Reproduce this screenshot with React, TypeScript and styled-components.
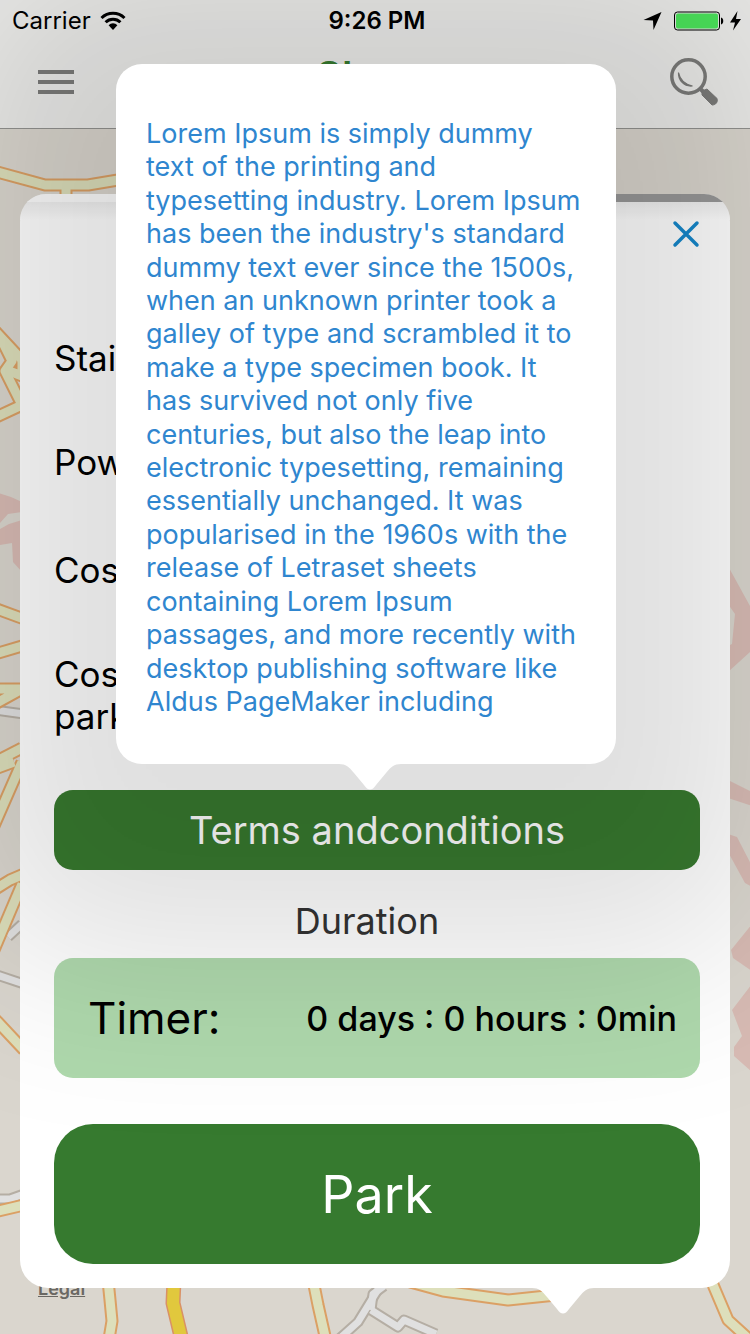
import React from "react";
import styled, { createGlobalStyle } from "styled-components";

const GlobalStyle = createGlobalStyle`
  * { box-sizing: border-box; }
  body { margin: 0; background: #dad6ce; }
  button { border: 0; padding: 0; font: inherit; cursor: pointer; }
`;

const Screen = styled.div`
  position: relative;
  z-index: 0;
  min-height: 100vh;
  overflow: hidden;
  padding-bottom: 46px;
  color: #000;
  font-family: Inter, "Liberation Sans", sans-serif;
`;

const MapLayer = styled.svg`
  position: absolute;
  inset: 0;
  z-index: -2;
  width: 100%;
  height: 100%;
`;

const Header = styled.header`
  height: 129px;
  background: #ebebe9;
  border-bottom: 1px solid #92928f;
`;

const StatusBar = styled.div`
  display: grid;
  grid-template-columns: 1fr auto 1fr;
  align-items: center;
  height: 42px;
  padding: 0 8px 0 12px;
  font-size: 24px;
  line-height: 42px;
`;

const StatusGroup = styled.div<{ $end?: boolean }>`
  display: flex;
  align-items: center;
  justify-content: ${(p) => (p.$end ? "flex-end" : "flex-start")};
  gap: ${(p) => (p.$end ? 6 : 9)}px;
`;

const Clock = styled.time`
  font-weight: 600;
`;

const NavBar = styled.nav`
  display: flex;
  align-items: flex-start;
  justify-content: space-between;
  padding: 14px 30px 0 38px;
`;

const IconButton = styled.button`
  display: flex;
  background: none;
`;

const MenuButton = styled(IconButton)`
  padding-top: 13px;
`;

const Title = styled.h1`
  margin: 0;
  color: #367a2f;
  font-size: 40px;
  font-weight: 600;
  line-height: 40px;
`;

const Card = styled.main`
  position: relative;
  margin: 65px 20px 0;
  padding-bottom: 24px;
  border-radius: 28px;
  background: #fff;
`;

const CardTop = styled.div`
  overflow: hidden;
  height: 26px;
  border-radius: 26px 26px 0 0;
  background: linear-gradient(#e9e9e9, #fff);
`;

const Progress = styled.div`
  height: 8px;
  background: linear-gradient(90deg, #fcfcfc 50%, #989898 50%);
`;

const CardBody = styled.div`
  display: flex;
  flex-direction: column;
  padding: 0 30px 0 34px;
`;

const CloseButton = styled(IconButton)`
  align-self: flex-end;
`;

const Details = styled.div`
  display: flex;
  flex-direction: column;
  gap: 66px;
  margin-top: 89px;
  font-size: 35px;
  line-height: 42px;
`;

const DetailGroup = styled.ul`
  display: flex;
  flex-direction: column;
  gap: 62px;
  margin: 0;
  padding: 0;
  list-style: none;
`;

const Detail = styled.li`
  width: 80px;
`;

const TermsButton = styled.button`
  height: 80px;
  margin-top: 53px;
  border-radius: 19px;
  background: #387a2f;
  color: #fff;
  font-size: 38px;
`;

const DurationTitle = styled.h2`
  margin: 28px 0 0;
  padding-right: 20px;
  text-align: center;
  color: #333;
  font-size: 36px;
  font-weight: 400;
  line-height: 46px;
`;

const TimerRow = styled.div`
  display: flex;
  align-items: center;
  justify-content: space-between;
  height: 120px;
  margin-top: 14px;
  padding: 0 23px 0 34px;
  border-radius: 19px;
  background: #afd9ad;
`;

const TimerLabel = styled.span`
  font-size: 44px;
`;

const TimerValue = styled.output`
  font-size: 34px;
  font-weight: 500;
`;

const ParkButton = styled.button`
  height: 140px;
  margin-top: 46px;
  border-radius: 39px;
  background: #367a2f;
  color: #fff;
  font-size: 52px;
`;

const LegalLink = styled.a`
  position: absolute;
  bottom: 33px;
  left: 38px;
  z-index: -1;
  color: #6a6863;
  font-size: 18px;
  font-weight: 600;
  line-height: 24px;
`;

const Pointer = styled.svg<{ $x: string }>`
  position: absolute;
  top: calc(100% - 1px);
  left: ${(p) => p.$x};
  display: block;
`;

const PopoverLayer = styled.div`
  position: absolute;
  inset: 0;
  padding: 64px 134px 0 116px;
`;

const Popover = styled.aside`
  position: relative;
  height: 700px;
  padding: 53px 24px 46px 30px;
  border-radius: 26px;
  background: #fff;
  box-shadow: 0 50px 190px 148px rgba(0, 0, 0, 0.125);
`;

const PopoverText = styled.p`
  display: flex;
  flex-direction: column;
  justify-content: space-between;
  height: 100%;
  margin: 0;
  color: #2f86cf;
  font-size: 27px;
  line-height: 33px;
  white-space: nowrap;
`;

const TERMS = [
  "Lorem Ipsum is simply dummy",
  "text of the printing and",
  "typesetting industry. Lorem Ipsum",
  "has been the industry's standard",
  "dummy text ever since the 1500s,",
  "when an unknown printer took a",
  "galley of type and scrambled it to",
  "make a type specimen book. It",
  "has survived not only five",
  "centuries, but also the leap into",
  "electronic typesetting, remaining",
  "essentially unchanged. It was",
  "popularised in the 1960s with the",
  "release of Letraset sheets",
  "containing Lorem Ipsum",
  "passages, and more recently with",
  "desktop publishing software like",
  "Aldus PageMaker including",
];

const ROADS = [
  "M-10 170 L45 185 H88 L130 178",
  "M66 186 V200",
  "M-5 331 L22 360 V376 L4 369",
  "M0 337 L12 361 L5 371 L19 399 L22 405 L-6 418",
  "M-6 608 L24 619",
  "M-5 654 L22 646",
  "M-5 689 H22 L-5 704",
  "M22 748 L-5 762",
  "M-8 770 L14 762",
  "M22 762 L-6 826",
  "M-6 890 L10 880 L24 874",
  "M22 884 L-6 950",
  "M-6 1018 L24 1050",
  "M-6 1212 L24 1205",
  "M108 1280 L110 1300 L112 1321 L108 1345",
  "M313 1280 L318 1305 L327 1345",
  "M410 1282 L443 1291 L508 1300 L556 1295",
  "M711 1280 L728 1320 L750 1340",
];

const LANES = [
  "M-6 710 L24 714",
  "M22 924 L8 937",
  "M-6 974 L24 984",
  "M-6 1199 L10 1199 L24 1194",
  "M385 1278 L358 1322 L338 1340",
  "M371 1310 L398 1327 L404 1320 L436 1334",
  "M371 1310 L373 1294 L384 1286",
];

const BUILDINGS = [
  "M-2 493 L11 497 L22 502 V512 L8 514 L0 523Z",
  "M0 529 L9 524 L22 520 V572 L13 562 L12 543 L0 545Z",
  "M728 566 L739 586 L750 606 V652 L728 672 V646 L732 644 L735 614 L728 604Z",
  "M728 780 L752 792 V806 L728 798Z",
  "M728 834 L737 837 L752 866 V887 L745 883 L728 852Z",
  "M752 924 L731 950 L733 958 L752 971Z",
  "M752 984 L732 1010 L742 1036 L734 1047 V1056 L752 1072Z",
];

function CityMap() {
  return (
    <MapLayer viewBox="0 0 750 1334" preserveAspectRatio="none" aria-hidden="true">
      <rect width="750" height="1334" fill="#dad6ce" />
      {BUILDINGS.map((d) => <path key={d} d={d} fill="#d8bbb4" />)}
      <g fill="none" strokeLinejoin="round">
        {LANES.map((d) => <path key={d} d={d} stroke="#b5aea4" strokeWidth="11" />)}
        {LANES.map((d) => <path key={d} d={d} stroke="#e0e0e0" strokeWidth="7" />)}
        {ROADS.map((d) => <path key={d} d={d} stroke="#dba065" strokeWidth="13" />)}
        {ROADS.map((d) => <path key={d} d={d} stroke="#dddfbb" strokeWidth="9" />)}
        <path d="M174 1280 L173 1303 L183 1345" stroke="#d99166" strokeWidth="15" />
        <path d="M174 1280 L173 1303 L183 1345" stroke="#e1c83d" strokeWidth="12" />
      </g>
    </MapLayer>
  );
}

function BubblePointer({ x }: { x: string }) {
  return (
    <Pointer $x={x} width="62" height="27" viewBox="0 0 62 27" aria-hidden="true">
      <path d="M0 0V1C7 1 10 4 15 10L25 22C29 28 33 28 37 22L47 10C52 4 55 1 62 1V0Z" fill="#fff" />
    </Pointer>
  );
}

function WifiIcon() {
  return (
    <svg width="26" height="20" viewBox="0 0 26 20" aria-hidden="true">
      <g fill="none" stroke="#000" strokeWidth="3">
        <path d="M1.500 7A16.500 16.500 0 0 1 24.500 7" />
        <path d="M5.600 11.200A10.500 10.500 0 0 1 20.400 11.200" />
      </g>
      <path d="M8.600 14.200A6.200 6.200 0 0 1 17.400 14.200L13 19Z" />
    </svg>
  );
}

function LocationIcon() {
  return (
    <svg width="19" height="20" viewBox="0 0 19 20" aria-hidden="true">
      <path d="M18.500 1L10.500 19L10 9.500L0.500 9Z" />
    </svg>
  );
}

function BatteryIcon() {
  return (
    <svg width="50" height="20" viewBox="0 0 50 20" aria-hidden="true">
      <rect x="0.500" y="1" width="45" height="18" rx="3" fill="#e6e6e4" stroke="#000" strokeWidth="1" />
      <rect x="2" y="2.500" width="42" height="15" rx="2" fill="#4be35b" />
      <path d="M47 6.500C50 7 50 13 47 13.500Z" />
    </svg>
  );
}

function BoltIcon() {
  return (
    <svg width="12" height="20" viewBox="0 0 12 20" aria-hidden="true">
      <path d="M7.500 0L0 11.500H5L3 19.500L11 8H6Z" />
    </svg>
  );
}

function MenuIcon() {
  return (
    <svg width="36" height="25" viewBox="0 0 36 25" aria-hidden="true">
      <path d="M0 3H36M0 13H36M0 23H36" stroke="#7b7b79" strokeWidth="4" />
    </svg>
  );
}

function SearchIcon() {
  return (
    <svg width="50" height="50" viewBox="0 0 50 50" fill="none" stroke="#7b7b79" aria-hidden="true">
      <circle cx="18.500" cy="20.500" r="16.700" strokeWidth="3.500" />
      <path d="M8.500 16.500C8 24 14 31 22.500 30C16 28.500 10 24 8.500 16.500Z" fill="#7b7b79" strokeWidth="1.200" />
      <path d="M30 32.500L34 36.500" strokeWidth="4" />
      <path d="M32 35L37 33L47 42.500C48 46 46 49 42 49L32 39Z" fill="#7b7b79" strokeWidth="1" strokeLinejoin="round" />
    </svg>
  );
}

function CloseIcon() {
  return (
    <svg width="28" height="28" viewBox="0 0 28 28" aria-hidden="true">
      <path d="M3 3L25 25M25 3L3 25" stroke="#1688cc" strokeWidth="3.500" strokeLinecap="round" />
    </svg>
  );
}

export default function App() {
  return (
    <>
      <GlobalStyle />
      <Screen>
        <CityMap />
        <Header>
          <StatusBar>
            <StatusGroup>
              Carrier
              <WifiIcon />
            </StatusGroup>
            <Clock>9:26 PM</Clock>
            <StatusGroup $end>
              <LocationIcon />
              <span />
              <BatteryIcon />
              <BoltIcon />
            </StatusGroup>
          </StatusBar>
          <NavBar>
            <MenuButton type="button" aria-label="Menu"><MenuIcon /></MenuButton>
            <Title>Share</Title>
            <IconButton type="button" aria-label="Search"><SearchIcon /></IconButton>
          </NavBar>
        </Header>

        <Card>
          <CardTop><Progress /></CardTop>
          <CardBody>
            <CloseButton type="button" aria-label="Close"><CloseIcon /></CloseButton>
            <Details>
              <DetailGroup>
                <Detail>Stai</Detail>
                <Detail>Pow</Detail>
              </DetailGroup>
              <DetailGroup>
                <Detail>Cos</Detail>
                <Detail>Cos park</Detail>
              </DetailGroup>
            </Details>
            <TermsButton type="button">Terms andconditions</TermsButton>
            <DurationTitle>Duration</DurationTitle>
            <TimerRow>
              <TimerLabel>Timer:</TimerLabel>
              <TimerValue>0 days : 0 hours : 0min</TimerValue>
            </TimerRow>
            <ParkButton type="button">Park</ParkButton>
          </CardBody>
          <BubblePointer x="calc(75% - 21px)" />
        </Card>
        <LegalLink href="#legal">Legal</LegalLink>

        <PopoverLayer>
          <Popover>
            <PopoverText>
              {TERMS.map((line) => (
                <span key={line}>{line} </span>
              ))}
            </PopoverText>
            <BubblePointer x="calc(50% - 27px)" />
          </Popover>
        </PopoverLayer>
      </Screen>
    </>
  );
}
